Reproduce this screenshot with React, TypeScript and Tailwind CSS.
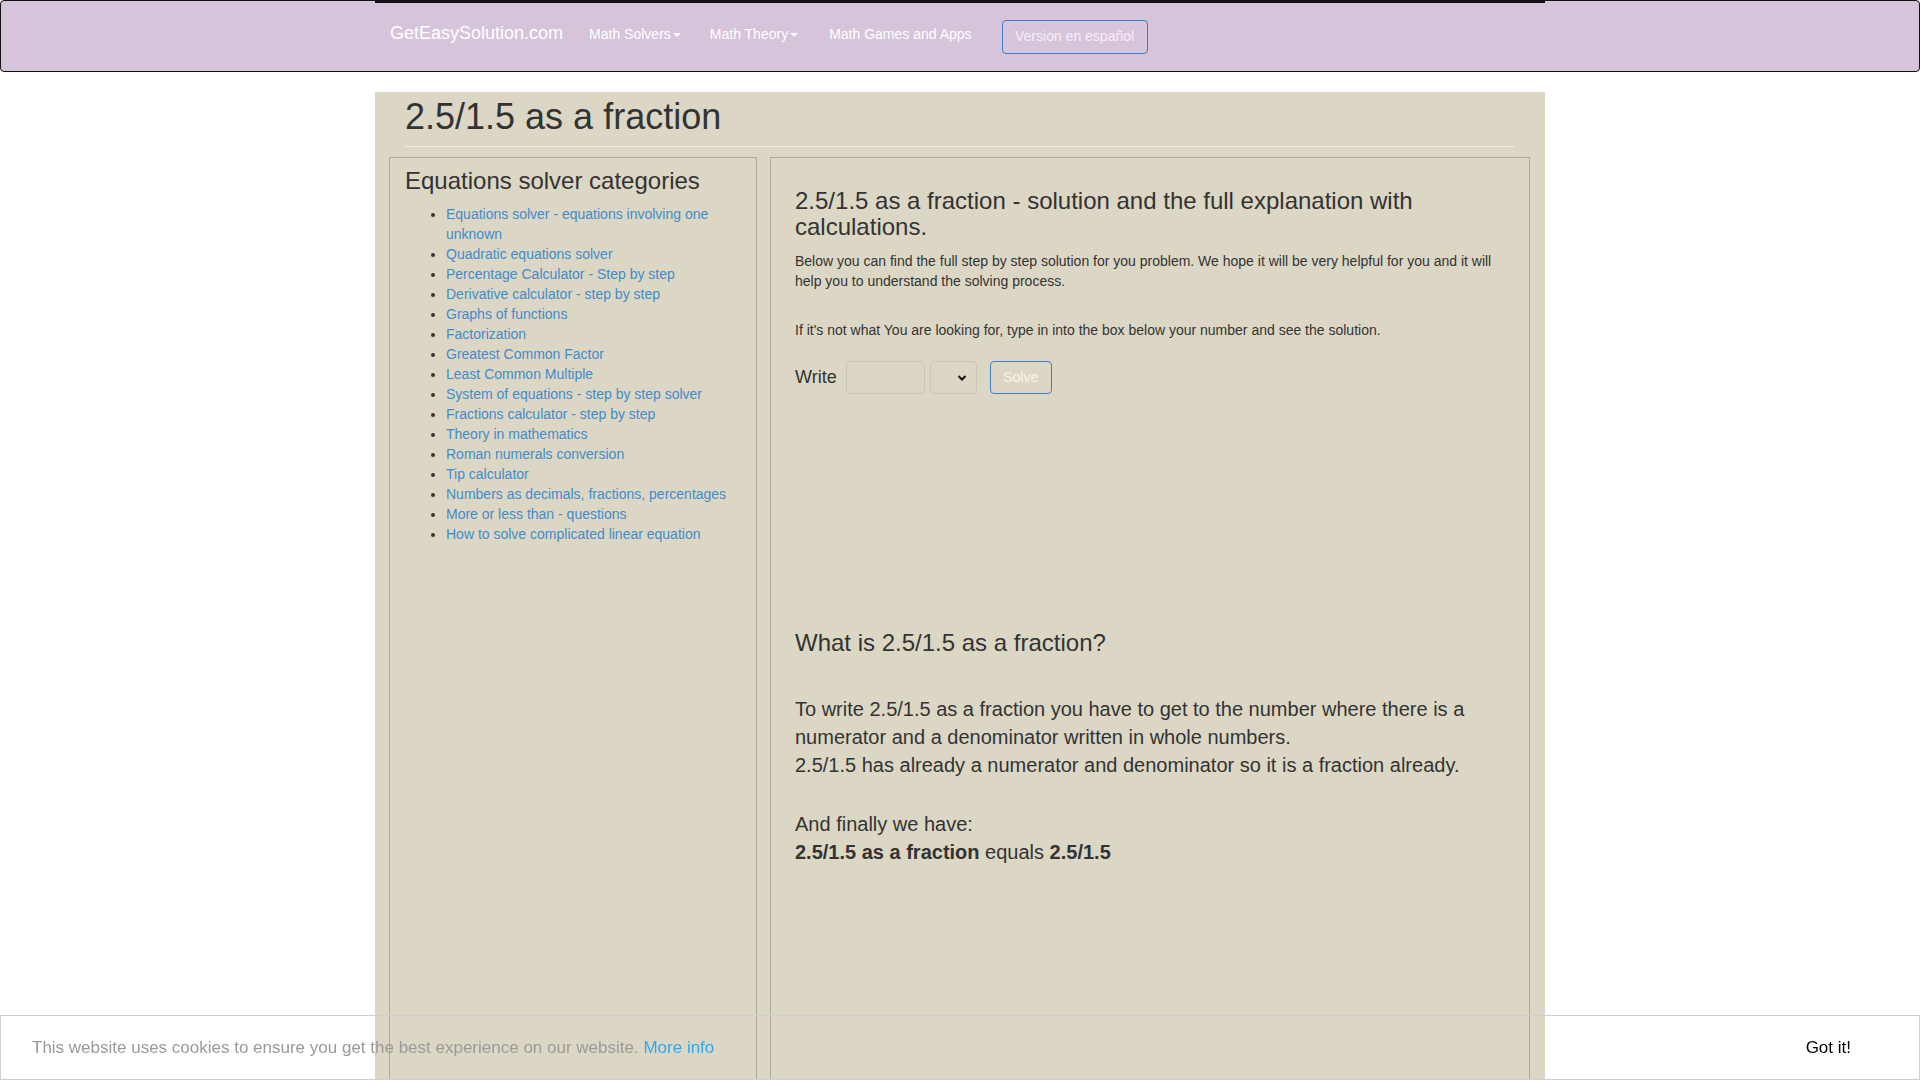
import React from "react";

/* ---- Data ---- */

const CATEGORIES = [
  "Equations solver - equations involving one unknown",
  "Quadratic equations solver",
  "Percentage Calculator - Step by step",
  "Derivative calculator - step by step",
  "Graphs of functions",
  "Factorization",
  "Greatest Common Factor",
  "Least Common Multiple",
  "System of equations - step by step solver",
  "Fractions calculator - step by step",
  "Theory in mathematics",
  "Roman numerals conversion",
  "Tip calculator",
  "Numbers as decimals, fractions, percentages",
  "More or less than - questions",
  "How to solve complicated linear equation",
];

/* ---- Caret for dropdown links ---- */

function Caret() {
  return (
    <span className="ml-[2px] inline-block h-0 w-0 border-x-[4px] border-t-[4px] border-x-transparent border-t-white align-middle" />
  );
}

/* ---- Top navigation ---- */

function Navbar() {
  return (
    <nav className="h-[72px] rounded-[4px] border border-[#111] bg-[#d6c4da]">
      <div className="mx-auto flex h-full w-[1170px] items-center border-t-2 border-[#111] px-[15px] pb-[8px]">
        <a className="text-[18px] leading-[20px] text-white">GetEasySolution.com</a>
        <a className="ml-[26px] mt-[2px] text-[14px] text-white">
          Math Solvers
          <Caret />
        </a>
        <a className="ml-[29px] mt-[2px] text-[14px] text-white">
          Math Theory
          <Caret />
        </a>
        <a className="ml-[31px] mt-[2px] text-[14px] text-white">Math Games and Apps</a>
        <button className="ml-[30px] mt-[7px] h-[34px] w-[146px] rounded-[4px] border border-[#3a7fc8] text-[14px] text-[#f6eff8]">
          Version en español
        </button>
      </div>
    </nav>
  );
}

/* ---- Left: categories ---- */

function Categories() {
  return (
    <div className="min-h-[1000px] w-[368px] shrink-0 border border-[#a9a9a4] px-[15px] pt-[10px]">
      <h3 className="text-[24px] font-normal leading-[26px] text-[#333]">
        Equations solver categories
      </h3>
      <ul className="mt-[10px] list-disc pl-[41px] marker:text-[#333]">
        {CATEGORIES.map((c) => (
          <li key={c} className="text-[14px] leading-[20px]">
            <a className="text-[#428bca]">{c}</a>
          </li>
        ))}
      </ul>
    </div>
  );
}

/* ---- Right: solution ---- */

function Solution() {
  return (
    <div className="min-h-[1000px] w-[760px] shrink-0 border border-[#a9a9a4] px-[24px] pt-[30px]">
      <h3 className="text-[24px] font-normal leading-[26px] text-[#333]">
        2.5/1.5 as a fraction - solution and the full explanation with calculations.
      </h3>
      <p className="mt-[11px] text-[14px] leading-[20px] text-[#333]">
        Below you can find the full step by step solution for you problem. We hope it will be
        very helpful for you and it will help you to understand the solving process.
      </p>
      <p className="mt-[29px] text-[14px] leading-[20px] text-[#333]">
        If it's not what You are looking for, type in into the box below your number and see the
        solution.
      </p>

      <div className="mt-[21px] flex h-[33px] items-center">
        <span className="text-[18px] text-[#333]">Write</span>
        <input className="ml-[9px] h-[33px] w-[79px] rounded-[4px] border border-[#c9c5b6] bg-transparent" />
        <div className="relative ml-[5px] h-[33px] w-[47px] rounded-[4px] border border-[#c9c5b6]">
          <svg
            className="absolute right-[9px] top-[12px]"
            width="10"
            height="8"
            viewBox="0 0 10 8"
          >
            <path d="M1.5 2 L5 5.5 L8.5 2" fill="none" stroke="#111" strokeWidth="2" />
          </svg>
        </div>
        <button className="ml-[13px] h-[33px] w-[62px] rounded-[4px] border border-[#3a7fc8] text-[14px] text-[#f6f4ee]">
          Solve
        </button>
      </div>

      <h3 className="mt-[236px] text-[24px] font-normal leading-[26px] text-[#333]">
        What is 2.5/1.5 as a fraction?
      </h3>

      <div className="mt-[39px] text-[20px] leading-[28px] text-[#333]">
        To write 2.5/1.5 as a fraction you have to get to the number where there is a numerator
        and a denominator written in whole numbers.
        <br />
        2.5/1.5 has already a numerator and denominator so it is a fraction already.
      </div>
      <div className="mt-[31px] text-[20px] leading-[28px] text-[#333]">
        And finally we have:
        <br />
        <b>2.5/1.5 as a fraction</b> equals <b>2.5/1.5</b>
      </div>
    </div>
  );
}

/* ---- Cookie notice ---- */

function CookieBar() {
  return (
    <div className="fixed bottom-0 left-0 right-0 flex h-[65px] items-center justify-between border border-[#cfcfcf] pl-[31px] pr-[68px]">
      <p className="text-[17px] text-[#9a9a9a]">
        This website uses cookies to ensure you get the best experience on our website.{" "}
        <a className="text-[#31a8f0]">More info</a>
      </p>
      <button className="text-[17px] text-black">Got it!</button>
    </div>
  );
}

export default function App() {
  return (
    <div className="min-h-screen bg-white font-['Liberation_Sans',Arial,sans-serif] text-[#333]">
      <Navbar />
      <main className="mx-auto mt-[20px] w-[1170px] bg-[#dcd7c5] pl-[14px] pr-[15px] pt-[5px]">
        <h1 className="mx-[16px] border-b border-[#eeece4] pb-[9px] text-[36px] font-normal leading-[40px] text-[#333]">
          2.5/1.5 as a fraction
        </h1>
        <div className="mt-[10px] flex justify-between">
          <Categories />
          <Solution />
        </div>
      </main>
      <CookieBar />
    </div>
  );
}
